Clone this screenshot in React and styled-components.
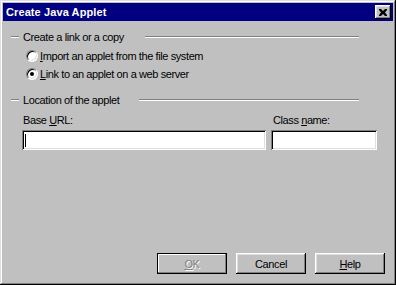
import React from "react";
import styled, { createGlobalStyle } from "styled-components";

const GlobalStyle = createGlobalStyle`
  html, body {
    margin: 0;
    padding: 0;
    background: #c0c0c0;
  }
  * {
    box-sizing: border-box;
  }
`;

const FONT = `"Liberation Sans", Arial, sans-serif`;

const Window = styled.div`
  width: 396px;
  height: 285px;
  padding: 3px;
  background: #c0c0c0;
  font-family: ${FONT};
  font-size: 11px;
  color: #000;
  display: flex;
  flex-direction: column;
  box-shadow: inset -1px -1px #000, inset 1px 1px #dfdfdf,
    inset -2px -2px #808080, inset 2px 2px #fff;
`;

const TitleBar = styled.div`
  height: 18px;
  background: #000080;
  display: flex;
  align-items: center;
  justify-content: space-between;
  padding: 0 2px 0 3px;
`;

const Title = styled.span`
  color: #fff;
  font-weight: bold;
  font-size: 11px;
  letter-spacing: 0.1px;
`;

const CloseButton = styled.div`
  width: 16px;
  height: 14px;
  background: #c0c0c0;
  display: flex;
  align-items: center;
  justify-content: center;
  box-shadow: inset -1px -1px #000, inset 1px 1px #fff,
    inset -2px -2px #808080, inset 2px 2px #dfdfdf;
`;

const Body = styled.div`
  flex: 1;
  display: flex;
  flex-direction: column;
  padding: 9px 0 8px 0;
  letter-spacing: -0.4px;
`;

const GroupHeader = styled.div`
  display: flex;
  align-items: center;
  width: 348px;
  height: 14px;
  margin-left: 8px;
  margin-top: ${(p) => p.$top || 0}px;
`;

const Etch = styled.div`
  height: 2px;
  border-top: 1px solid #808080;
  border-bottom: 1px solid #fff;
  width: ${(p) => (p.$width ? `${p.$width}px` : "auto")};
  flex: ${(p) => (p.$width ? "none" : 1)};
`;

const GroupLabel = styled.span`
  padding: 0 ${(p) => p.$right}px 0 4px;
  white-space: nowrap;
`;

const RadioRow = styled.div`
  display: flex;
  align-items: center;
  height: 18px;
  padding-left: 23px;
  margin-top: ${(p) => p.$top || 0}px;
`;

const RadioCircle = styled.span`
  position: relative;
  width: 12px;
  height: 12px;
  border-radius: 50%;
  background: #fff;
  border: 1px solid;
  border-color: #808080 #fff #fff #808080;
  box-shadow: inset 1px 1px #000, inset -1px -1px #dfdfdf;
  margin-right: 2px;
  flex: none;
  &::after {
    content: "";
    display: ${(p) => (p.$checked ? "block" : "none")};
    position: absolute;
    left: 3px;
    top: 3px;
    width: 4px;
    height: 4px;
    border-radius: 50%;
    background: #000;
  }
`;

const Mnemonic = styled.u`
  text-decoration: underline;
  text-underline-offset: 1px;
`;

const FieldGrid = styled.div`
  display: grid;
  grid-template-columns: 244px 106px;
  column-gap: 5px;
  margin-left: 19px;
  margin-top: 6px;
`;

const FieldLabel = styled.span`
  height: 14px;
  line-height: 14px;
  padding-left: ${(p) => p.$pad || 1}px;
  margin-bottom: 3px;
`;

const TextBox = styled.div`
  height: 20px;
  background: #fff;
  display: flex;
  align-items: center;
  padding-left: 3px;
  box-shadow: inset 1px 1px #808080, inset -1px -1px #fff,
    inset 2px 2px #000, inset -2px -2px #dfdfdf;
`;

const Caret = styled.span`
  width: 1px;
  height: 13px;
  background: #000;
`;

const Spacer = styled.div`
  flex: 1;
`;

const ButtonRow = styled.div`
  display: flex;
  justify-content: flex-end;
  gap: 9px;
  padding-right: 8px;
`;

const Button = styled.div`
  width: 70px;
  height: 21px;
  display: flex;
  align-items: center;
  justify-content: center;
  background: #c0c0c0;
  color: ${(p) => (p.$disabled ? "#808080" : "#000")};
  text-shadow: ${(p) => (p.$disabled ? "1px 1px #fff" : "none")};
  box-shadow: ${(p) =>
    p.$default
      ? "inset 0 0 0 1px #000, inset -2px -2px #808080, inset 2px 2px #fff"
      : "inset -1px -1px #000, inset 1px 1px #fff, inset -2px -2px #808080, inset 2px 2px #dfdfdf"};
`;

const CloseIcon = () => (
  <svg width="8" height="7" viewBox="0 0 8 7">
    <path
      d="M0 0h2l2 2 2-2h2v1L6 3.5 8 6v1H6L4 5 2 7H0V6l2-2.5L0 1z"
      fill="#000"
    />
  </svg>
);

export default function App() {
  return (
    <>
      <GlobalStyle />
      <Window>
        <TitleBar>
          <Title>Create Java Applet</Title>
          <CloseButton>
            <CloseIcon />
          </CloseButton>
        </TitleBar>
        <Body>
          <GroupHeader>
            <Etch $width={8} />
            <GroupLabel $right={21}>Create a link or a copy</GroupLabel>
            <Etch />
          </GroupHeader>
          <RadioRow $top={3}>
            <RadioCircle />
            <span>
              <Mnemonic>I</Mnemonic>mport an applet from the file system
            </span>
          </RadioRow>
          <RadioRow>
            <RadioCircle $checked />
            <span>
              <Mnemonic>L</Mnemonic>ink to an applet on a web server
            </span>
          </RadioRow>
          <GroupHeader $top={10}>
            <Etch $width={8} />
            <GroupLabel $right={20}>Location of the applet</GroupLabel>
            <Etch />
          </GroupHeader>
          <FieldGrid>
            <FieldLabel>
              Base <Mnemonic>U</Mnemonic>RL:
            </FieldLabel>
            <FieldLabel $pad={2}>
              Class <Mnemonic>n</Mnemonic>ame:
            </FieldLabel>
            <TextBox>
              <Caret />
            </TextBox>
            <TextBox />
          </FieldGrid>
          <Spacer />
          <ButtonRow>
            <Button $default $disabled>
              <Mnemonic>O</Mnemonic>K
            </Button>
            <Button>Cancel</Button>
            <Button>
              <Mnemonic>H</Mnemonic>elp
            </Button>
          </ButtonRow>
        </Body>
      </Window>
    </>
  );
}
